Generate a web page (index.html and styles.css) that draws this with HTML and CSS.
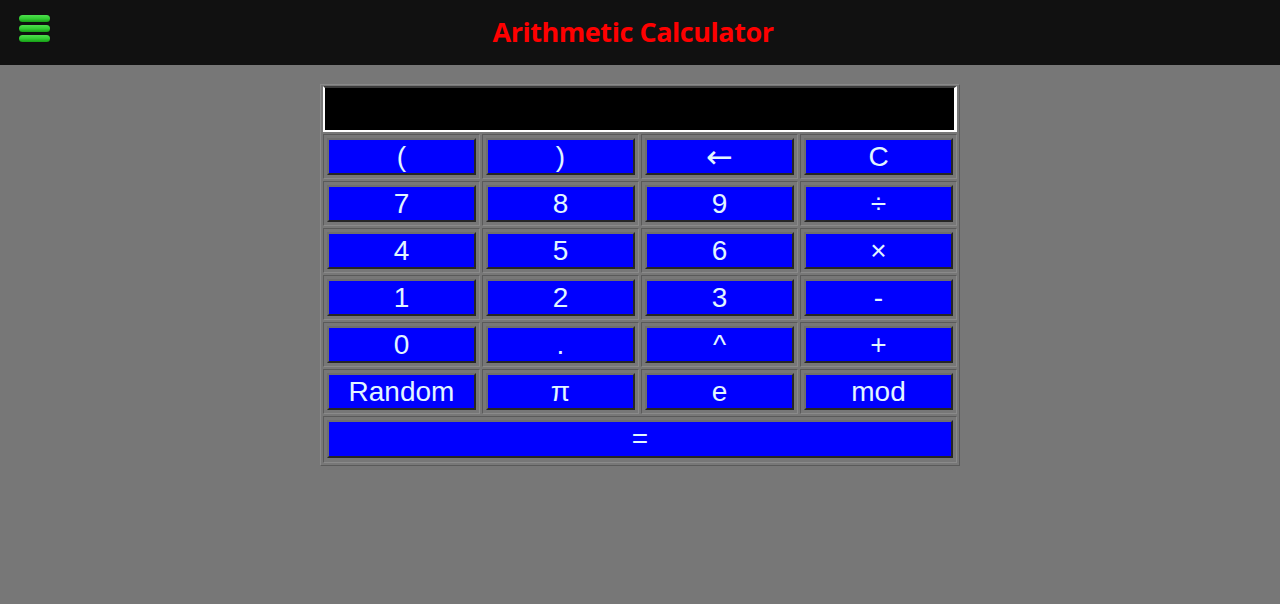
FILE: index.html
```html
<!DOCTYPE html>
<html>
<head>
<meta charset="utf-8">
<title>Arithmetic Calculator</title>
<link rel="stylesheet" href="styles.css">
</head>
<body>
<header class="topbar">
  <div class="menu-icon" aria-label="menu">
    <span class="pill"></span>
    <span class="pill"></span>
    <span class="pill"></span>
  </div>
  <h1 class="title">Arithmetic Calculator</h1>
</header>
<main class="main">
  <table class="calc">
    <tr>
      <td class="display-cell" colspan="4"><input class="display" type="text" readonly></td>
    </tr>
    <tr>
      <td><button class="key">(</button></td>
      <td><button class="key">)</button></td>
      <td><button class="key arrow">&larr;</button></td>
      <td><button class="key">C</button></td>
    </tr>
    <tr>
      <td><button class="key">7</button></td>
      <td><button class="key">8</button></td>
      <td><button class="key">9</button></td>
      <td><button class="key">&divide;</button></td>
    </tr>
    <tr>
      <td><button class="key">4</button></td>
      <td><button class="key">5</button></td>
      <td><button class="key">6</button></td>
      <td><button class="key">&times;</button></td>
    </tr>
    <tr>
      <td><button class="key">1</button></td>
      <td><button class="key">2</button></td>
      <td><button class="key">3</button></td>
      <td><button class="key">-</button></td>
    </tr>
    <tr>
      <td><button class="key">0</button></td>
      <td><button class="key">.</button></td>
      <td><button class="key">^</button></td>
      <td><button class="key">+</button></td>
    </tr>
    <tr>
      <td><button class="key">Random</button></td>
      <td><button class="key">&pi;</button></td>
      <td><button class="key">e</button></td>
      <td><button class="key">mod</button></td>
    </tr>
    <tr>
      <td class="equals-cell" colspan="4"><button class="key equals">=</button></td>
    </tr>
  </table>
</main>
</body>
</html>
```
FILE: styles.css
```css
html, body {
  margin: 0;
  padding: 0;
}
body {
  background: #777777;
  font-family: "Liberation Sans", Arial, sans-serif;
  height: 604px;
}
.topbar {
  height: 65px;
  background: #111111;
  display: flex;
  align-items: center;
  justify-content: center;
  position: relative;
  padding-right: 14px;
  box-sizing: border-box;
}
.menu-icon {
  position: absolute;
  left: 19px;
  top: 15px;
  display: flex;
  flex-direction: column;
  gap: 3px;
}
.pill {
  display: block;
  width: 31px;
  height: 7px;
  border-radius: 3.5px;
  background: linear-gradient(#4ee04e, #33cc33 50%, #169e16);
  box-shadow: 0 0 1px rgba(0, 0, 0, 0.6);
}
.title {
  margin: 0 0 3px 0;
  color: #ff0000;
  font-family: "Open Sans", "Noto Sans", sans-serif;
  font-weight: 700;
  font-size: 27px;
  letter-spacing: -0.45px;
}
.main {
  padding-top: 19px;
}
.calc {
  width: 640px;
  margin: 0 auto;
  table-layout: fixed;
  border-collapse: separate;
  border-spacing: 2px;
  border: 1px solid;
  border-color: #8a8a8a #5a5a5a #5a5a5a #8a8a8a;
}
.calc td {
  border: 1px solid;
  border-color: #5a5a5a #8a8a8a #8a8a8a #5a5a5a;
  padding: 3px 3px;
}
.calc td.display-cell {
  border: 0;
  padding: 0;
}
.calc td.equals-cell {
  padding-bottom: 4px;
}
.display {
  display: block;
  box-sizing: border-box;
  width: 100%;
  height: 46px;
  margin: -1px 0 0 0;
  background: #000000;
  border-style: solid;
  border-width: 2px 3px 2px 2px;
  border-color: #3a3a3a #ffffff #ffffff #ffffff;
  outline: none;
}
.key {
  display: block;
  box-sizing: border-box;
  width: 100%;
  height: 37px;
  margin: 0;
  padding: 0;
  background: #0000ff;
  color: #e2f6ff;
  font-family: "Liberation Sans", Arial, sans-serif;
  font-size: 28px;
  line-height: 1;
  border-style: solid;
  border-width: 2px;
  border-color: #6e6e6e #262626 #262626 #6e6e6e;
  cursor: pointer;
}
.key.equals {
  height: 38px;
}
.key.arrow {
  font-family: "DejaVu Sans", sans-serif;
  font-size: 32px;
}
```
